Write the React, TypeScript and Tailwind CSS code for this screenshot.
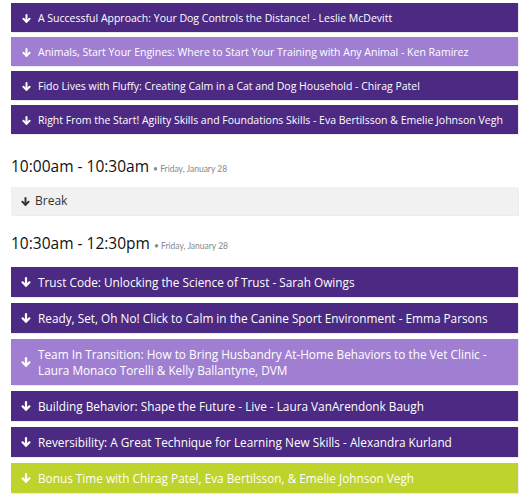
type Tone = "dark" | "light" | "green";

type Session = {
  title: string;
  tone: Tone;
};

const TONES: Record<Tone, string> = {
  dark: "bg-[#4c2a83] text-white",
  light: "bg-[#a07fd2] text-white",
  green: "bg-[#bed32b] text-white",
};

const MORNING: Session[] = [
  { title: "A Successful Approach: Your Dog Controls the Distance! - Leslie McDevitt", tone: "dark" },
  { title: "Animals, Start Your Engines: Where to Start Your Training with Any Animal - Ken Ramirez", tone: "light" },
  { title: "Fido Lives with Fluffy: Creating Calm in a Cat and Dog Household - Chirag Patel", tone: "dark" },
  { title: "Right From the Start! Agility Skills and Foundations Skills - Eva Bertilsson & Emelie Johnson Vegh", tone: "dark" },
];

const LATE: Session[] = [
  { title: "Trust Code: Unlocking the Science of Trust - Sarah Owings", tone: "dark" },
  { title: "Ready, Set, Oh No! Click to Calm in the Canine Sport Environment - Emma Parsons", tone: "dark" },
  {
    title: "Team In Transition: How to Bring Husbandry At-Home Behaviors to the Vet Clinic - Laura Monaco Torelli & Kelly Ballantyne, DVM",
    tone: "light",
  },
  { title: "Building Behavior: Shape the Future - Live - Laura VanArendonk Baugh", tone: "dark" },
  { title: "Reversibility: A Great Technique for Learning New Skills - Alexandra Kurland", tone: "dark" },
  { title: "Bonus Time with Chirag Patel, Eva Bertilsson, & Emelie Johnson Vegh", tone: "green" },
];

function DownArrow({ className }: { className: string }) {
  return (
    <svg viewBox="0 0 10 10" className={`shrink-0 ${className}`} fill="none" stroke="currentColor" strokeWidth="2.2" strokeLinecap="round" strokeLinejoin="round">
      <path d="M5 1.2V8.6" />
      <path d="M1.6 5.3L5 8.7L8.4 5.3" />
    </svg>
  );
}

// compact bars for the first block, larger ones for the late-morning block
function SessionBar({ session, large = false }: { session: Session; large?: boolean }) {
  return (
    <div
      className={`flex items-center shadow-[1px_1px_0_#ece9f1] ${TONES[session.tone]} ${
        large ? "gap-[7px] pl-[10px] pr-[8px] py-[7px]" : "gap-[7px] pl-[11px] pr-[8px] pt-[7px] pb-[6px]"
      }`}
    >
      <DownArrow className={large ? "w-[10px] h-[10px]" : "w-[9px] h-[9px]"} />
      <span className={large ? "text-[11.8px] leading-[16px]" : "text-[10.5px] leading-[16px]"}>
        {session.title}
      </span>
    </div>
  );
}

function BreakBar() {
  return (
    <div className="flex items-center gap-[5px] pl-[10px] pr-[8px] py-[6px] bg-[#f1f1f1] text-[#333] shadow-[1px_1px_0_#ececec]">
      <DownArrow className="w-[9px] h-[9px]" />
      <span className="text-[12px] leading-[16px]">Break</span>
    </div>
  );
}

function SlotHeading({ time, day }: { time: string; day: string }) {
  return (
    <div className="flex items-baseline gap-[4px] text-[#111]">
      <span className="text-[15.5px] leading-[24px]">{time}</span>
      <span className="text-[8.5px] text-[#888] font-['Lato',sans-serif]">• {day}</span>
    </div>
  );
}

export default function App() {
  return (
    <div className="w-[528px] h-[500px] bg-white overflow-hidden font-['Open_Sans',sans-serif]">
      <div className="ml-[11px] w-[507px] pt-[3px] flex flex-col">
        <div className="flex flex-col gap-[5px]">
          {MORNING.map((s) => (
            <SessionBar key={s.title} session={s} />
          ))}
        </div>

        <div className="mt-[20px]">
          <SlotHeading time="10:00am - 10:30am" day="Friday, January 28" />
        </div>
        <div className="mt-[9px]">
          <BreakBar />
        </div>

        <div className="mt-[16px]">
          <SlotHeading time="10:30am - 12:30pm" day="Friday, January 28" />
        </div>
        <div className="mt-[12px] flex flex-col gap-[6px]">
          {LATE.map((s) => (
            <SessionBar key={s.title} session={s} large />
          ))}
        </div>
      </div>
    </div>
  );
}
